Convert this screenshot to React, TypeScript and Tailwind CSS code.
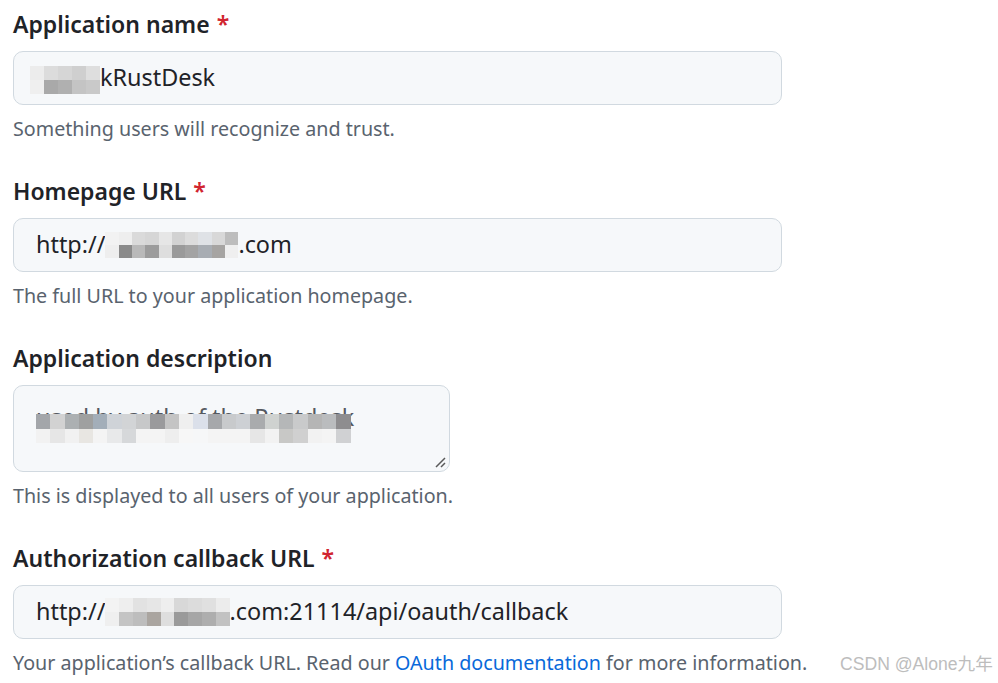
import type { ReactNode } from 'react'

const FONT = { fontFamily: '"Noto Sans", "Open Sans", "Noto Sans CJK SC", sans-serif' }

// two-row mosaic columns: [top, bottom]
type Col = [string, string]

function Mosaic({ cols, cell = 14 }: { cols: Col[]; cell?: number }) {
  return (
    <span className="inline-flex align-middle" style={{ height: cell * 2 }}>
      {cols.map(([t, b], i) => (
        <span key={i} className="flex flex-col" style={{ width: cell }}>
          <span className="flex-1" style={{ background: t }} />
          <span className="flex-1" style={{ background: b }} />
        </span>
      ))}
    </span>
  )
}

const NAME_BLUR: Col[] = [
  ['#ececec', '#efefef'],
  ['#dcdcdc', '#a9a9a9'],
  ['#d6d6d6', '#b0b0b0'],
  ['#cfcfcf', '#c4c4c4'],
  ['#dedede', '#c9c9c9'],
]

const HOME_BLUR: Col[] = [
  ['#f2f2f2', '#eeeeee'],
  ['#eeeeee', '#8a8a8a'],
  ['#dadada', '#b9b9b9'],
  ['#d6d6d6', '#9c9c9c'],
  ['#e6e6e6', '#dedede'],
  ['#d2d2d2', '#9a9a9a'],
  ['#dcdcdc', '#a3a3a3'],
  ['#dfe2e6', '#a8adb3'],
  ['#d8d8d8', '#a6a4a2'],
  ['#bdbdbd', '#efefef'],
]

const CB_BLUR: Col[] = [
  ['#f3f3f3', '#efefef'],
  ['#eeeeee', '#c4c4c4'],
  ['#e2e2e2', '#bdbdbd'],
  ['#e6e6e6', '#aaa5a0'],
  ['#eeeeee', '#dedede'],
  ['#d8d8d8', '#9a9a9a'],
  ['#dcdcdc', '#a6a6a6'],
  ['#e0e0e0', '#aeaeae'],
  ['#ececec', '#c2c2c2'],
]

const DESC_BLUR: Col[] = [
  ['#a3a6aa', '#f2f2f2'],
  ['#d2d2d2', '#e6e6e6'],
  ['#acb0b2', '#f1f1f1'],
  ['#9fa0a0', '#e8e6e2'],
  ['#a3aeb9', '#f4f4f4'],
  ['#cfd3d8', '#e8e9ea'],
  ['#d2d4d6', '#d6d8da'],
  ['#c7c8c9', '#f4f4f4'],
  ['#9a9a9c', '#f4f4f4'],
  ['#c4c4c4', '#eeeeee'],
  ['#efefef', '#f7f7f7'],
  ['#dbe0ea', '#f6f7f8'],
  ['#a6a8ab', '#f4f4f4'],
  ['#c8cacc', '#f4f4f4'],
  ['#cdd0d4', '#f4f4f4'],
  ['#a9abad', '#e6e6e6'],
  ['#cfd2d0', '#f2f2f2'],
  ['#b5b7b8', '#c8c8c6'],
  ['#c9cacb', '#d0d0d0'],
  ['#b5b5b5', '#f2f2f2'],
  ['#babcbe', '#f4f4f4'],
  ['#8e8d8f', '#d0d1d3'],
]

function Field({
  label,
  required,
  note,
  children,
}: {
  label: string
  required?: boolean
  note: ReactNode
  children: ReactNode
}) {
  return (
    <div className="mb-[28px]">
      <div className="h-[40px] leading-[40px] text-[23px] font-semibold text-[#1f2328] mb-[7px]">
        {label}
        {required && <span className="text-[#d1242f] ml-[7px]">*</span>}
      </div>
      {children}
      <div className="mt-[10px] h-[28px] leading-[28px] text-[19.7px] text-[#59636e]">{note}</div>
    </div>
  )
}

function Input({ children }: { children: ReactNode }) {
  return (
    <div className="w-[769px] h-[54px] flex items-center px-[22px] bg-[#f6f8fa] border border-[#d1d9e0] rounded-[10px] text-[23.4px] text-[#1f2328] whitespace-nowrap">
      {children}
    </div>
  )
}

export default function App() {
  return (
    <div className="relative w-[998px] h-[683px] bg-white overflow-hidden pl-[13px] pt-[4px]" style={FONT}>
      <Field label="Application name" required note="Something users will recognize and trust.">
        <Input>
          <span className="-ml-[6px]">
            <Mosaic cols={NAME_BLUR} cell={14} />
          </span>
          <span>kRustDesk</span>
        </Input>
      </Field>

      <Field label="Homepage URL" required note="The full URL to your application homepage.">
        <Input>
          <span>http://</span>
          <Mosaic cols={HOME_BLUR} cell={13.3} />
          <span>.com</span>
        </Input>
      </Field>

      <Field label="Application description" note="This is displayed to all users of your application.">
        <div className="relative w-[437px] h-[87px] bg-[#f6f8fa] border border-[#d1d9e0] rounded-[10px] pl-[22px] pt-[14px] text-[23.4px] text-[#1f2328]">
          <div className="relative inline-block whitespace-nowrap leading-[32px] text-[#55595f]">
            <span>used by auth of the Rustdesk</span>
            <div className="absolute left-0 top-[9px]">
              <Mosaic cols={DESC_BLUR} cell={14.3} />
            </div>
          </div>
          <svg className="absolute right-[2px] bottom-[2px]" width="14" height="14" viewBox="0 0 14 14">
            <path d="M3 12 L12 3 M8 12 L12 8" stroke="#5a5a5a" strokeWidth="1.5" />
          </svg>
        </div>
      </Field>

      <Field
        label="Authorization callback URL"
        required
        note={
          <>
            Your application’s callback URL. Read our{' '}
            <span className="text-[#0969da]">OAuth documentation</span> for more information.
          </>
        }
      >
        <Input>
          <span>http://</span>
          <Mosaic cols={CB_BLUR} cell={13.8} />
          <span>.com:21114/api/oauth/callback</span>
        </Input>
      </Field>

      <div
        className="absolute left-[840px] top-[651px] text-[17.6px] text-[#bdbdbd] whitespace-nowrap"
        style={{ fontFamily: '"Liberation Sans", "Noto Sans CJK SC", sans-serif' }}
      >
        CSDN @Alone九年
      </div>
    </div>
  )
}
